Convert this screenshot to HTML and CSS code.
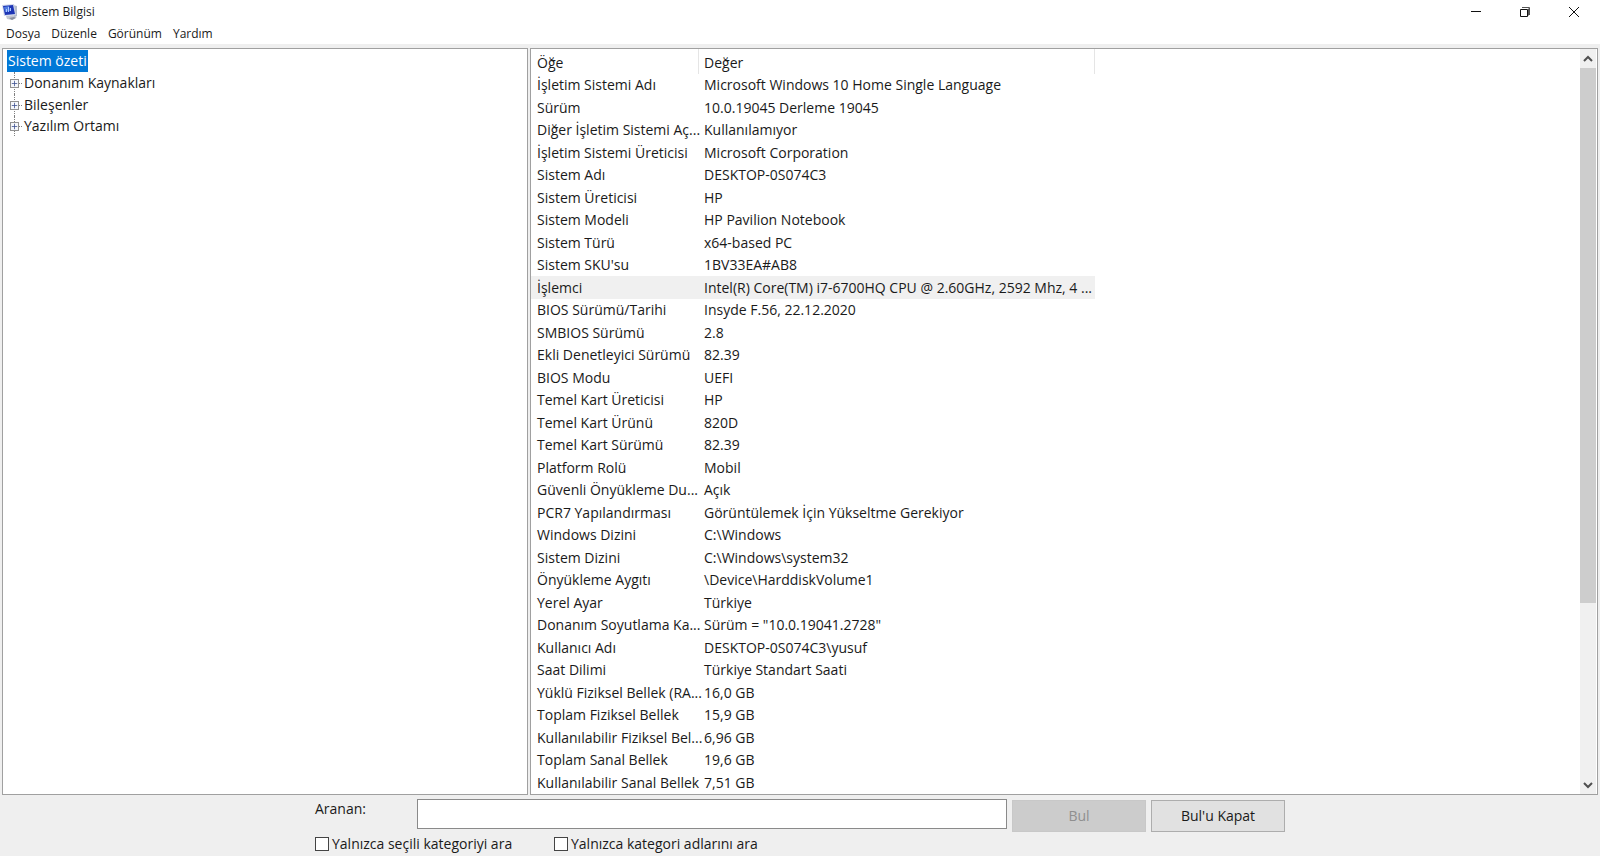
FILE: index.html
```html
<!DOCTYPE html>
<html lang="tr">
<head>
<meta charset="utf-8">
<title>Sistem Bilgisi</title>
<link rel="stylesheet" href="styles.css">
</head>
<body>
<header class="titlebar">
  <svg class="app-icon" viewBox="0 0 16 16" aria-hidden="true">
    <path d="M4 12l7-1 4 2-5 3-5-1z" fill="#c4c7d0"/>
    <path d="M11 1l4 1v10l-3 1z" fill="#b4bccb"/>
    <path d="M0 1l12-1 2 11-12 1z" fill="#cdd4ea"/>
    <path d="M1 2l10-1 2 9-10 1z" fill="#1d35b5"/>
    <path d="M2 3l5-1 1 5-5 1z" fill="#4f79e0"/>
    <path d="M4.500 8V5m2 3V3m2 4V4" stroke="#a9c6ff" fill="none"/>
    <path d="M7 14l5-1 2 1-4 2z" fill="#8b91a0"/>
  </svg>
  <h1 class="title">Sistem Bilgisi</h1>
  <div class="window-controls">
    <button class="window-button" aria-label="Simge durumuna küçült"><svg viewBox="0 0 12 12"><path d="M1 5.500h10"/></svg></button>
    <button class="window-button" aria-label="Önceki boyut"><svg viewBox="0 0 12 12"><path d="M1.500 3.500h7v7h-7z"/><path d="M3 1.500h7.500V9M9.500 2.500v7" stroke="#555"/></svg></button>
    <button class="window-button" aria-label="Kapat"><svg viewBox="0 0 12 12"><path d="M1 1l10 10M11 1L1 11"/></svg></button>
  </div>
</header>
<nav class="menubar">
  <button class="menu">Dosya</button>
  <button class="menu">Düzenle</button>
  <button class="menu">Görünüm</button>
  <button class="menu">Yardım</button>
</nav>
<main class="panes">
  <section class="pane tree">
    <button class="tree-root">Sistem özeti</button>
    <ul class="branches">
      <li class="branch"><button class="expander" aria-label="Genişlet"><svg viewBox="0 0 9 9"><path d="M1 4.500h7M4.500 1v7"/></svg></button><span class="branch-name">Donanım Kaynakları</span></li>
      <li class="branch"><button class="expander" aria-label="Genişlet"><svg viewBox="0 0 9 9"><path d="M1 4.500h7M4.500 1v7"/></svg></button><span class="branch-name">Bileşenler</span></li>
      <li class="branch"><button class="expander" aria-label="Genişlet"><svg viewBox="0 0 9 9"><path d="M1 4.500h7M4.500 1v7"/></svg></button><span class="branch-name">Yazılım Ortamı</span></li>
    </ul>
  </section>
  <section class="pane details">
    <div class="list">
      <table class="items">
        <colgroup><col class="col-item"><col class="col-value"></colgroup>
        <thead><tr><th>Öğe</th><th>Değer</th></tr></thead>
        <tbody>
          <tr><td>İşletim Sistemi Adı</td><td>Microsoft Windows 10 Home Single Language</td></tr>
          <tr><td>Sürüm</td><td>10.0.19045 Derleme 19045</td></tr>
          <tr><td>Diğer İşletim Sistemi Aç...</td><td>Kullanılamıyor</td></tr>
          <tr><td>İşletim Sistemi Üreticisi</td><td>Microsoft Corporation</td></tr>
          <tr><td>Sistem Adı</td><td>DESKTOP-0S074C3</td></tr>
          <tr><td>Sistem Üreticisi</td><td>HP</td></tr>
          <tr><td>Sistem Modeli</td><td>HP Pavilion Notebook</td></tr>
          <tr><td>Sistem Türü</td><td>x64-based PC</td></tr>
          <tr><td>Sistem SKU'su</td><td>1BV33EA#AB8</td></tr>
          <tr class="selected"><td>İşlemci</td><td>Intel(R) Core(TM) i7-6700HQ CPU @ 2.60GHz, 2592 Mhz, 4 ...</td></tr>
          <tr><td>BIOS Sürümü/Tarihi</td><td>Insyde F.56, 22.12.2020</td></tr>
          <tr><td>SMBIOS Sürümü</td><td>2.8</td></tr>
          <tr><td>Ekli Denetleyici Sürümü</td><td>82.39</td></tr>
          <tr><td>BIOS Modu</td><td>UEFI</td></tr>
          <tr><td>Temel Kart Üreticisi</td><td>HP</td></tr>
          <tr><td>Temel Kart Ürünü</td><td>820D</td></tr>
          <tr><td>Temel Kart Sürümü</td><td>82.39</td></tr>
          <tr><td>Platform Rolü</td><td>Mobil</td></tr>
          <tr><td>Güvenli Önyükleme Du...</td><td>Açık</td></tr>
          <tr><td>PCR7 Yapılandırması</td><td>Görüntülemek İçin Yükseltme Gerekiyor</td></tr>
          <tr><td>Windows Dizini</td><td>C:\Windows</td></tr>
          <tr><td>Sistem Dizini</td><td>C:\Windows\system32</td></tr>
          <tr><td>Önyükleme Aygıtı</td><td>\Device\HarddiskVolume1</td></tr>
          <tr><td>Yerel Ayar</td><td>Türkiye</td></tr>
          <tr><td>Donanım Soyutlama Ka...</td><td>Sürüm = "10.0.19041.2728"</td></tr>
          <tr><td>Kullanıcı Adı</td><td>DESKTOP-0S074C3\yusuf</td></tr>
          <tr><td>Saat Dilimi</td><td>Türkiye Standart Saati</td></tr>
          <tr><td>Yüklü Fiziksel Bellek (RA...</td><td>16,0 GB</td></tr>
          <tr><td>Toplam Fiziksel Bellek</td><td>15,9 GB</td></tr>
          <tr><td>Kullanılabilir Fiziksel Bel...</td><td>6,96 GB</td></tr>
          <tr><td>Toplam Sanal Bellek</td><td>19,6 GB</td></tr>
          <tr><td>Kullanılabilir Sanal Bellek</td><td>7,51 GB</td></tr>
        </tbody>
      </table>
    </div>
    <div class="scrollbar">
      <button class="scroll-button" aria-label="Yukarı kaydır"><svg viewBox="0 0 10 8"><path d="M1 6l4-4 4 4"/></svg></button>
      <div class="scroll-thumb"></div>
      <div class="scroll-rest"></div>
      <button class="scroll-button" aria-label="Aşağı kaydır"><svg viewBox="0 0 10 8"><path d="M1 2l4 4 4-4"/></svg></button>
    </div>
  </section>
</main>
<form class="find">
  <div class="find-row">
    <label class="find-label" for="query">Aranan:</label>
    <input class="find-input" id="query" type="text">
    <button class="find-button" type="button" disabled>Bul</button>
    <button class="find-button" type="button">Bul'u Kapat</button>
  </div>
  <div class="options">
    <label class="option"><input class="check" type="checkbox">Yalnızca seçili kategoriyi ara</label>
    <label class="option"><input class="check" type="checkbox">Yalnızca kategori adlarını ara</label>
  </div>
</form>
</body>
</html>
```

FILE: styles.css
```css
* {
  box-sizing: border-box;
}

body {
  margin: 0;
  min-height: 100vh;
  display: flex;
  flex-direction: column;
  background: #efefef;
  color: #1a1a1a;
  font-family: "Open Sans", "Noto Sans", sans-serif;
  font-size: 14px;
  line-height: 22px;
}

button,
input {
  font: inherit;
  color: inherit;
  border-radius: 0;
}

button {
  border: 0;
  padding: 0;
  background: none;
}

svg {
  display: block;
}

.titlebar {
  display: flex;
  align-items: center;
  height: 24px;
  padding-left: 2px;
  background: #fff;
}

.app-icon {
  width: 16px;
  height: 16px;
}

.title {
  margin: 0 auto 0 4px;
  font-size: 12px;
  font-weight: 400;
  line-height: 24px;
}

.window-controls {
  display: flex;
  padding-right: 2px;
}

.window-button {
  display: grid;
  place-items: center;
  width: 49px;
  height: 24px;
}

.window-button svg {
  width: 12px;
  height: 12px;
  fill: none;
  stroke: #111;
}

.menubar {
  display: flex;
  gap: 11px;
  height: 20px;
  padding-left: 6px;
  background: #fff;
}

.menu {
  font-size: 12px;
  line-height: 20px;
}

.panes {
  flex: 1;
  display: grid;
  grid-template-columns: minmax(0, 33fr) minmax(0, 67fr);
  gap: 2px;
  padding: 4px 2px 0;
}

.pane {
  border: 1px solid #a0a0a0;
  background: #fff;
}

.tree {
  padding: 1px 4px;
}

.tree-root {
  display: block;
  padding: 0 1px;
  background: #0078d7;
  color: #fff;
}

.branches {
  margin: 0;
  padding: 0;
  list-style: none;
}

.branch {
  display: flex;
  align-items: center;
  height: 22px;
  margin-left: 7px;
  border-left: 1px dotted #808080;
}

.branch:last-child {
  height: 20px;
}

.expander {
  width: 9px;
  height: 9px;
  margin-left: -5px;
  border: 1px solid #919191;
  background: #f5f7fb;
}

.expander svg {
  width: 7px;
  height: 7px;
  stroke: #3a4f8f;
  fill: none;
}

.branch-name {
  display: flex;
  align-items: center;
}

.branch-name::before {
  content: "";
  width: 3px;
  margin-right: 2px;
  border-top: 1px dotted #808080;
}

.details {
  display: flex;
}

.list {
  flex: 1;
  min-width: 0;
}

.items {
  width: 564px;
  table-layout: fixed;
  border-collapse: separate;
  border-spacing: 0;
}

.col-item {
  width: 168px;
}

.items th,
.items td {
  height: 22px;
  padding: 0 0 0 5px;
  text-align: left;
  font-weight: 400;
  white-space: nowrap;
}

.items th:first-child,
.items td:first-child {
  padding-left: 6px;
}

.items th {
  height: 25px;
  padding-top: 2px;
  border-right: 1px solid #e5e5e5;
}

.items tr:nth-child(even) td {
  height: 23px;
}

.selected {
  background: #f0f0f0;
}

.scrollbar {
  display: flex;
  flex-direction: column;
  width: 16px;
  margin-right: 1px;
  background: #f0f0f0;
}

.scroll-button {
  display: grid;
  place-items: center;
  height: 19px;
}

.scroll-button svg {
  width: 10px;
  height: 8px;
  fill: none;
  stroke: #505050;
  stroke-width: 2;
}

.scroll-thumb {
  flex: 28;
  background: #cdcdcd;
}

.scroll-rest {
  flex: 9;
}

.find {
  width: 970px;
  max-width: 100%;
  margin: 0 auto;
  padding: 4px 0 1px;
}

.find-row {
  display: flex;
  gap: 5px;
  height: 34px;
}

.find-label {
  width: 97px;
  line-height: 20px;
}

.find-input {
  flex: 1;
  min-width: 0;
  height: 30px;
  padding: 0 4px;
  border: 1px solid #8a8a8a;
  background: #fff;
}

.find-button {
  width: 134px;
  height: 32px;
  margin-top: 1px;
  border: 1px solid #adadad;
  background: #e1e1e1;
}

.find-button:disabled {
  border-color: #c8c8c8;
  background: #cccccc;
  color: #8f8f8f;
}

.options {
  display: flex;
}

.option {
  display: flex;
  align-items: center;
  gap: 3px;
  width: 239px;
  white-space: nowrap;
}

.check {
  appearance: none;
  width: 14px;
  height: 14px;
  margin: 0;
  border: 1px solid #444;
  background: #fff;
}
```
